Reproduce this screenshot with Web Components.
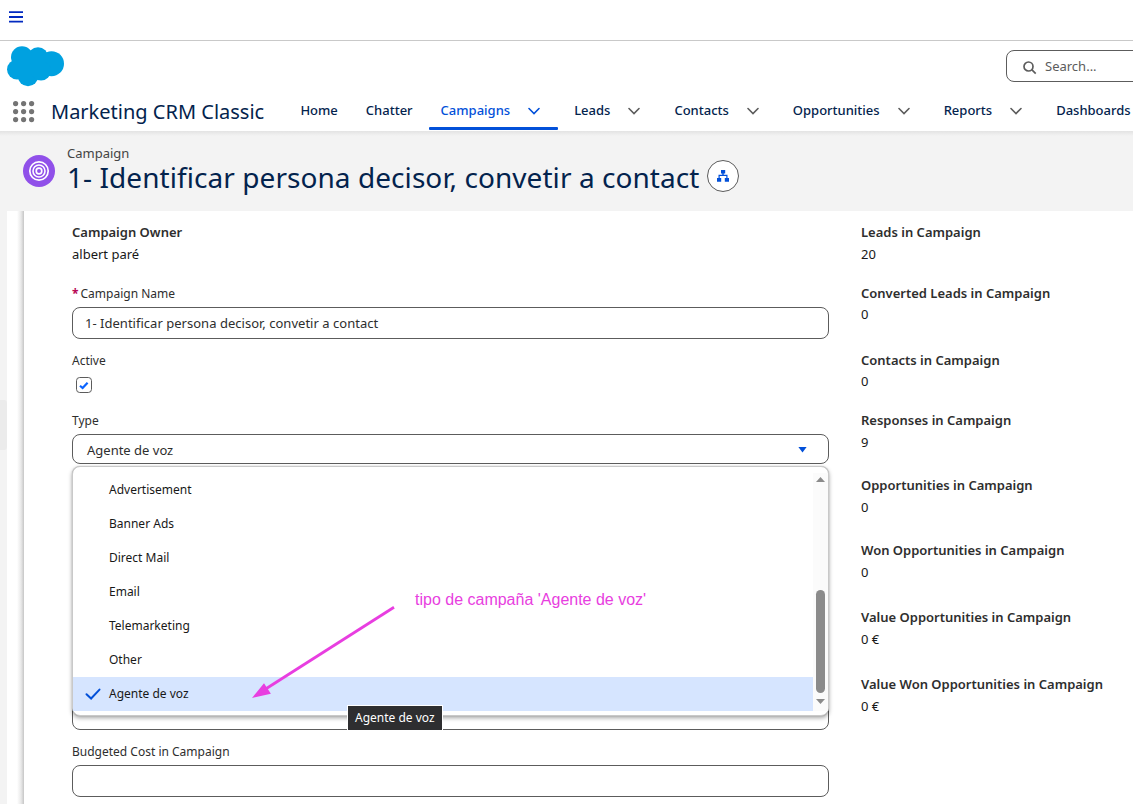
<!DOCTYPE html>
<html lang="en">
<head>
<meta charset="utf-8">
<title>Campaign | Marketing CRM Classic</title>
<style>
  html, body {
    margin: 0;
    height: 100%;
    overflow: hidden;
  }
  body {
    background: #fff;
    color: #2e2e2e;
    font: 13px/20px "Noto Sans", sans-serif;
  }
</style>
</head>
<body>
<crm-app></crm-app>

<script>
  class CrmNavItem extends HTMLElement {
    connectedCallback() {
      const menu = this.hasAttribute('menu');
      this.attachShadow({ mode: 'open' }).innerHTML = `
        <style>
          :host {
            display: flex;
            flex: none;
            align-items: center;
            box-sizing: border-box;
            height: 40px;
            padding: 0 ${menu ? 0 : 12}px 0 12px;
            border-bottom: 3px solid transparent;
            color: #03234d;
            font-weight: 500;
            white-space: nowrap;
          }
          :host([active]) {
            position: relative;
            color: #0250d9;
          }
          :host([active])::after {
            content: '';
            position: absolute;
            left: 0;
            right: 0;
            bottom: -2px;
            height: 3px;
            border-radius: 1px;
            background: #0250d9;
          }
          svg {
            width: 12px;
            height: 8px;
            margin: 2px 18px 0;
            fill: none;
            stroke: #5c5c5c;
            stroke-width: 1.6;
            stroke-linecap: round;
          }
          :host([active]) svg {
            stroke: #0250d9;
          }
        </style>
        <slot></slot>
        ${menu ? '<svg viewBox="0 0 12 8"><path d="M1 1.5l5 5 5-5"/></svg>' : ''}
      `;
    }
  }

  class CrmTopBar extends HTMLElement {
    constructor() {
      super();
      this.attachShadow({ mode: 'open' }).innerHTML = `
        <style>
          :host {
            display: block;
            height: 131px;
          }
          .strip {
            box-sizing: border-box;
            height: 41px;
            padding: 11px 0 0 9px;
            border-bottom: 1px solid #c9c9c9;
          }
          .strip svg, .brand svg {
            display: block;
          }
          .brand {
            display: flex;
            justify-content: space-between;
            height: 50px;
            padding-left: 7px;
            overflow: hidden;
          }
          .brand > svg {
            margin-top: 5px;
          }
          .search {
            display: flex;
            flex: none;
            align-items: center;
            gap: 8px;
            box-sizing: border-box;
            width: 180px;
            height: 32px;
            margin: 9px -53px 0 0;
            padding-left: 16px;
            border: 1px solid #5c5c5c;
            border-radius: 8px;
            color: #5c5c5c;
          }
          .search svg {
            margin-top: 3px;
          }
          nav {
            display: flex;
            gap: 4px;
            height: 40px;
          }
          .launcher {
            flex: none;
            margin: 10px 12px 0 13px;
          }
          .app {
            flex: none;
            width: 233.4px;
            font-size: 20px;
            line-height: 41px;
            color: #03234d;
            white-space: nowrap;
          }
        </style>
        <div class="strip">
          <svg width="14" height="12" fill="#022ac0"><path d="M0 .3h14v1.8H0zM0 5h14v2H0zM0 9.8h14v1.8H0z"/></svg>
        </div>
        <div class="brand">
          <svg width="57" height="41" viewBox="0 0 57 41" fill="#00a1e0">
            <circle cx="15" cy="11.2" r="11"/>
            <circle cx="31" cy="11.5" r="10.3"/>
            <circle cx="44.5" cy="17.7" r="12.5"/>
            <circle cx="10" cy="23.5" r="10"/>
            <circle cx="21" cy="30" r="10.2"/>
            <circle cx="34" cy="24.8" r="9.8"/>
            <path d="M12 10h26v18H12z"/>
          </svg>
          <div class="search">
            <svg width="14" height="14" viewBox="0 0 14 14" fill="none" stroke="#5c5c5c" stroke-width="1.7">
              <circle cx="5.5" cy="5.5" r="4.5"/><path d="M8.7 8.7l4 4"/>
            </svg>
            <span>Search...</span>
          </div>
        </div>
        <nav>
          <svg class="launcher" width="22" height="22" viewBox="0 0 22 22" fill="#747474">
            <circle cx="2.6" cy="2.6" r="2.6"/><circle cx="10.6" cy="2.6" r="2.6"/><circle cx="18.6" cy="2.6" r="2.6"/>
            <circle cx="2.6" cy="10.6" r="2.6"/><circle cx="10.6" cy="10.6" r="2.6"/><circle cx="18.6" cy="10.6" r="2.6"/>
            <circle cx="2.6" cy="18.6" r="2.6"/><circle cx="10.6" cy="18.6" r="2.6"/><circle cx="18.6" cy="18.6" r="2.6"/>
          </svg>
          <div class="app">Marketing CRM Classic</div>
          <crm-nav-item>Home</crm-nav-item>
          <crm-nav-item>Chatter</crm-nav-item>
          <crm-nav-item menu active>Campaigns</crm-nav-item>
          <crm-nav-item menu>Leads</crm-nav-item>
          <crm-nav-item menu>Contacts</crm-nav-item>
          <crm-nav-item menu>Opportunities</crm-nav-item>
          <crm-nav-item menu>Reports</crm-nav-item>
          <crm-nav-item>Dashboards</crm-nav-item>
        </nav>
      `;
    }
  }

  class CrmRecordHeader extends HTMLElement {
    constructor() {
      super();
      this.attachShadow({ mode: 'open' }).innerHTML = `
        <style>
          :host {
            display: flex;
            box-sizing: border-box;
            height: 80px;
            padding: 13px 0 0 23px;
            background: linear-gradient(#e3e3e3, #f3f3f3 5px);
          }
          .icon {
            flex: none;
            margin: 11px 12px 0 0;
          }
          .kind {
            line-height: 18px;
            color: #444;
          }
          h1 {
            margin: 0;
            font-size: 28px;
            font-weight: 400;
            line-height: 30px;
            letter-spacing: .063px;
            color: #03234d;
            white-space: nowrap;
          }
          .hierarchy {
            display: flex;
            align-items: center;
            justify-content: center;
            box-sizing: border-box;
            width: 32px;
            height: 32px;
            margin: 16px 0 0 8px;
            border: 1px solid #5c5c5c;
            border-radius: 50%;
            background: #fff;
          }
        </style>
        <svg class="icon" width="32" height="32" viewBox="0 0 32 32">
          <circle cx="16" cy="16" r="16" fill="#9050e9"/>
          <g fill="none" stroke="#fff">
            <circle cx="16" cy="16" r="9.2" stroke-width="1.7"/>
            <circle cx="16" cy="16" r="6" stroke-width="1.6"/>
            <circle cx="16" cy="16" r="2.8" stroke-width="1.7"/>
          </g>
        </svg>
        <div>
          <div class="kind"><slot name="kind"></slot></div>
          <h1><slot></slot></h1>
        </div>
        <div class="hierarchy">
          <svg width="12" height="12" viewBox="0 0 12 12" fill="#0250d9">
            <path d="M4 0h4.2v3.4H6.7v1.4h3.8v3.2H12v3.7H7.8V8h1.5V6H2.7v2h1.5v3.7H0V8h1.5V4.8h3.8V3.4H4z"/>
          </svg>
        </div>
      `;
    }
  }

  class CrmStat extends HTMLElement {
    constructor() {
      super();
      this.attachShadow({ mode: 'open' }).innerHTML = `
        <style>
          :host {
            display: block;
            white-space: nowrap;
          }
          .label {
            font-weight: 600;
          }
          .value {
            margin-top: 2px;
            color: #181818;
          }
          :host([tight]) .value {
            margin-top: 1px;
          }
        </style>
        <div class="label"><slot name="label"></slot></div>
        <div class="value"><slot></slot></div>
      `;
    }
  }

  class CrmField extends HTMLElement {
    connectedCallback() {
      this.attachShadow({ mode: 'open' }).innerHTML = `
        <style>
          :host {
            display: block;
          }
          .label {
            box-sizing: border-box;
            height: 20px;
            padding-top: 1px;
            font-size: 12px;
          }
          .required {
            margin-right: 2px;
            color: #b60554;
            font-weight: 700;
          }
          .box {
            display: flex;
            align-items: center;
            box-sizing: border-box;
            height: 32px;
            margin-top: 4px;
            padding: 0 12px;
            border: 1px solid #5c5c5c;
            border-radius: 8px;
            background: #fff;
            letter-spacing: .02px;
          }
          .check {
            display: block;
            margin: 7px 0 0 4px;
          }
        </style>
        <div class="label">${this.hasAttribute('required') ? '<span class="required">*</span>' : ''}<slot name="label"></slot></div>
        ${this.hasAttribute('checkbox')
          ? `<svg class="check" width="16" height="16" viewBox="0 0 16 16" fill="none">
               <rect x=".5" y=".5" width="15" height="15" rx="3.2" stroke="#5c5c5c"/>
               <path d="M4 8.7l2.6 2.3 5-5.3" stroke="#0b64ff" stroke-width="2.2"/>
             </svg>`
          : '<div class="box"><slot></slot></div>'}
      `;
    }
  }

  class CrmOption extends HTMLElement {
    connectedCallback() {
      this.attachShadow({ mode: 'open' }).innerHTML = `
        <style>
          :host {
            display: flex;
            align-items: center;
            height: 34px;
            color: #181818;
            font-size: 12px;
          }
          :host([selected]) {
            background: #d6e5ff;
          }
          .mark {
            display: flex;
            width: 24px;
            padding-left: 12px;
          }
        </style>
        <span class="mark">${this.hasAttribute('selected')
          ? '<svg width="16" height="12" viewBox="0 0 16 12" fill="none" stroke="#0250d9" stroke-width="2" stroke-linecap="round"><path d="M1.5 6.2l4.6 4.3L14.5 1.6"/></svg>'
          : ''}</span>
        <slot></slot>
      `;
    }
  }

  class CrmPicklist extends HTMLElement {
    constructor() {
      super();
      this.attachShadow({ mode: 'open' }).innerHTML = `
        <style>
          :host {
            display: block;
            position: relative;
          }
          .label {
            box-sizing: border-box;
            height: 20px;
            padding-top: 1px;
            font-size: 12px;
          }
          .box {
            display: flex;
            align-items: center;
            justify-content: space-between;
            box-sizing: border-box;
            height: 30px;
            margin-top: 4px;
            padding: 2px 21px 0 14px;
            border: 1px solid #5c5c5c;
            border-radius: 8px;
          }
          .caret {
            width: 9px;
            height: 6px;
            margin-top: -1px;
            background: #0250d9;
            clip-path: polygon(0 0, 100% 0, 50% 100%);
          }
          .menu {
            position: absolute;
            z-index: 1;
            top: 56px;
            left: 0;
            display: flex;
            box-sizing: border-box;
            width: 757px;
            height: 250px;
            padding: 6px 0 4px;
            border: 1px solid #c9c9c9;
            border-radius: 8px;
            background: #fff;
            box-shadow: 0 0 1px rgba(0, 0, 0, .25), 0 2px 4px rgba(0, 0, 0, .35);
          }
          .options {
            flex: 1;
          }
          .scroll {
            display: flex;
            flex-direction: column;
            align-items: center;
            width: 15px;
            background: #fbfbfb;
          }
          .up, .down {
            width: 9px;
            height: 5px;
            background: #8b8b8b;
          }
          .up {
            margin-top: 4px;
            clip-path: polygon(50% 0, 100% 100%, 0 100%);
          }
          .down {
            margin-top: 6px;
            clip-path: polygon(0 0, 100% 0, 50% 100%);
          }
          .thumb {
            width: 9px;
            height: 103px;
            margin-top: 108px;
            border-radius: 5px;
            background: #8b8b8b;
          }
        </style>
        <div class="label"><slot name="label"></slot></div>
        <div class="box"><slot name="value"></slot><span class="caret"></span></div>
        <div class="menu">
          <div class="options"><slot></slot></div>
          <div class="scroll">
            <span class="up"></span>
            <span class="thumb"></span>
            <span class="down"></span>
          </div>
        </div>
      `;
    }
  }

  // Tooltip and arrow note that float over the form
  class CrmNote extends HTMLElement {
    constructor() {
      super();
      this.attachShadow({ mode: 'open' }).innerHTML = `
        <style>
          :host {
            position: absolute;
            z-index: 2;
            inset: 0;
          }
          svg {
            position: absolute;
            left: 250px;
            top: 604px;
          }
          .text {
            position: absolute;
            left: 415px;
            top: 590px;
            color: #e83ee0;
            font: 16px/20px "Liberation Sans", sans-serif;
            white-space: nowrap;
          }
          .tip {
            position: absolute;
            left: 347px;
            top: 705px;
            box-sizing: border-box;
            width: 96px;
            height: 26px;
            padding-left: 7px;
            border: 1px solid #fff;
            background: #2e2e30;
            color: #fff;
            font-size: 12px;
            line-height: 24px;
            white-space: nowrap;
          }
        </style>
        <svg width="148" height="96" viewBox="0 0 148 96">
          <path d="M144 3.3L16 84.7" stroke="#e83ee0" stroke-width="2.8"/>
          <path d="M2 94L14 79.3 20.9 89.8z" fill="#e83ee0"/>
        </svg>
        <div class="text"><slot></slot></div>
        <div class="tip"><slot name="tip"></slot></div>
      `;
    }
  }

  class CrmForm extends HTMLElement {
    constructor() {
      super();
      this.attachShadow({ mode: 'open' }).innerHTML = `
        <style>
          :host {
            display: flex;
            height: 593px;
            overflow: hidden;
          }
          .rail {
            flex: none;
            width: 7px;
            box-sizing: border-box;
            padding-top: 189px;
            background: #f3f3f3;
          }
          .handle {
            height: 50px;
            border-radius: 0 3px 3px 0;
            background: #ebebeb;
          }
          .gutter {
            flex: none;
            width: 17px;
            background: linear-gradient(to right, #fff 10px, #e9e9e9 14px, #c6c6c6);
          }
          .panel {
            display: grid;
            grid-template-columns: 757px 1fr;
            grid-template-rows: 61px 67px 60px 65px 65px 67px 67px 67px 60px;
            column-gap: 32px;
            flex: 1;
            padding: 11px 0 0 48px;
            background: #fff;
          }
        </style>
        <div class="rail"><div class="handle"></div></div>
        <div class="gutter"></div>
        <div class="panel">
          <crm-stat><span slot="label">Campaign Owner</span>albert paré</crm-stat>
          <crm-stat><span slot="label">Leads in Campaign</span>20</crm-stat>

          <crm-field required><span slot="label">Campaign Name</span>1- Identificar persona decisor, convetir a contact</crm-field>
          <crm-stat tight><span slot="label">Converted Leads in Campaign</span>0</crm-stat>

          <crm-field checkbox><span slot="label">Active</span></crm-field>
          <crm-stat tight><span slot="label">Contacts in Campaign</span>0</crm-stat>

          <crm-picklist>
            <span slot="label">Type</span>
            <span slot="value">Agente de voz</span>
            <crm-option>Advertisement</crm-option>
            <crm-option>Banner Ads</crm-option>
            <crm-option>Direct Mail</crm-option>
            <crm-option>Email</crm-option>
            <crm-option>Telemarketing</crm-option>
            <crm-option>Other</crm-option>
            <crm-option selected>Agente de voz</crm-option>
          </crm-picklist>
          <crm-stat><span slot="label">Responses in Campaign</span>9</crm-stat>

          <div></div>
          <crm-stat><span slot="label">Opportunities in Campaign</span>0</crm-stat>

          <div></div>
          <crm-stat><span slot="label">Won Opportunities in Campaign</span>0</crm-stat>

          <div></div>
          <crm-stat><span slot="label">Value Opportunities in Campaign</span>0 €</crm-stat>

          <crm-field></crm-field>
          <crm-stat><span slot="label">Value Won Opportunities in Campaign</span>0 €</crm-stat>

          <crm-field><span slot="label">Budgeted Cost in Campaign</span></crm-field>
        </div>
      `;
    }
  }

  class CrmApp extends HTMLElement {
    constructor() {
      super();
      this.attachShadow({ mode: 'open' }).innerHTML = `
        <style>
          :host {
            display: block;
            position: relative;
            width: 1133px;
            height: 804px;
            overflow: hidden;
          }
        </style>
        <crm-top-bar></crm-top-bar>
        <crm-record-header>
          <span slot="kind">Campaign</span>1- Identificar persona decisor, convetir a contact
        </crm-record-header>
        <crm-form></crm-form>
        <crm-note>tipo de campaña 'Agente de voz'<span slot="tip">Agente de voz</span></crm-note>
      `;
    }
  }

  customElements.define('crm-nav-item', CrmNavItem);
  customElements.define('crm-top-bar', CrmTopBar);
  customElements.define('crm-record-header', CrmRecordHeader);
  customElements.define('crm-stat', CrmStat);
  customElements.define('crm-field', CrmField);
  customElements.define('crm-option', CrmOption);
  customElements.define('crm-picklist', CrmPicklist);
  customElements.define('crm-note', CrmNote);
  customElements.define('crm-form', CrmForm);
  customElements.define('crm-app', CrmApp);
</script>
</body>
</html>
